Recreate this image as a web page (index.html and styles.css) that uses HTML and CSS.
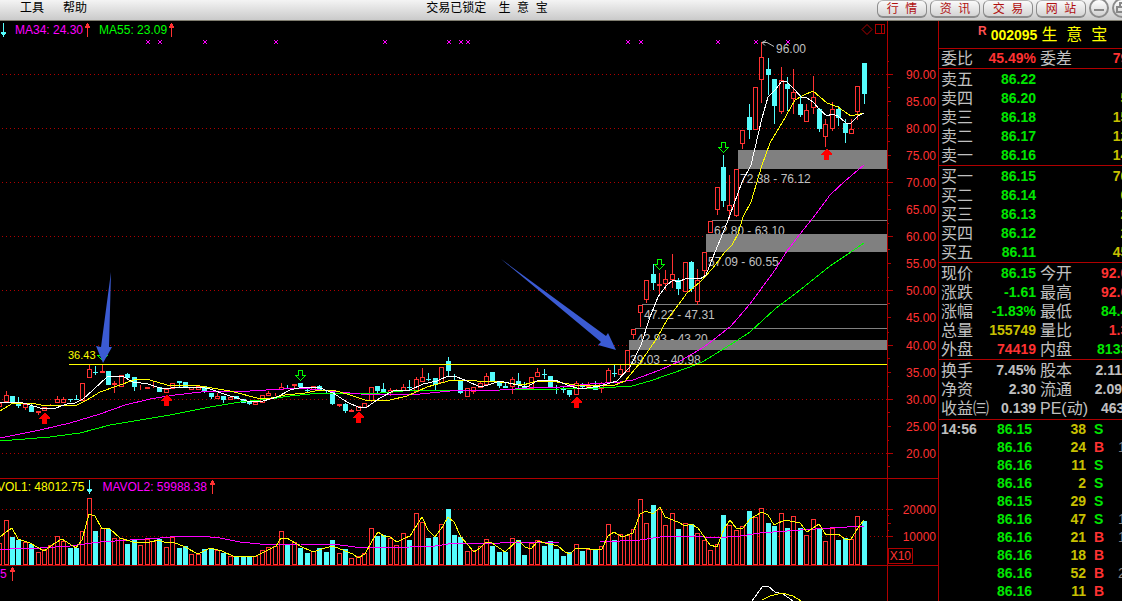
FILE: index.html
```html
<!DOCTYPE html>
<html lang="zh-CN">
<head>
<meta charset="utf-8">
<title>生意宝 002095</title>
<link rel="stylesheet" href="styles.css">
</head>
<body>
<header class="topbar">
  <nav class="menu">
    <button class="menu-item" type="button">工具</button>
    <button class="menu-item" type="button">帮助</button>
  </nav>
  <div class="topbar-title"><span>交易已锁定</span><span>生  意  宝</span></div>
  <div class="actions">
    <button class="pill" type="button">行  情</button>
    <button class="pill" type="button">资  讯</button>
    <button class="pill" type="button">交  易</button>
    <button class="pill" type="button">网  站</button>
    <button class="round" type="button" aria-label="最小化"><svg width="20" height="20" viewBox="0 0 20 20"><path d="M5 12h10" stroke="#888" stroke-width="2"/></svg></button>
    <button class="round" type="button" aria-label="还原"><svg width="20" height="20" viewBox="0 0 20 20"><path d="M5 9h7v5H5zM8 9V5h7v6h-3" fill="none" stroke="#888" stroke-width="2"/></svg></button>
  </div>
</header>
<main class="workspace">
  <div class="charts">
    <section class="pane pane-price">
      <svg class="plot" id="price" viewBox="0 21 938 457"></svg>
      <div class="legend">
        <svg class="arrow down" width="7" height="14" viewBox="0 0 7 14"><path d="M3 0h1v9h2v2H5v1H4v2H3v-2H2v-1H1V9h2z"/></svg>
        <span class="magenta">MA34: 24.30</span>
        <svg class="arrow up" width="7" height="14" viewBox="0 0 7 14"><path d="M3 14h1V5h2V3H5V1H4V0H3v1H2v2H1v2h2z"/></svg>
        <span class="green">MA55: 23.09</span>
        <svg class="arrow up" width="7" height="14" viewBox="0 0 7 14"><path d="M3 14h1V5h2V3H5V1H4V0H3v1H2v2H1v2h2z"/></svg>
      </div>
    </section>
    <section class="pane pane-volume">
      <svg class="plot" id="volume" viewBox="0 478 938 88"></svg>
      <div class="legend legend-volume">
        <span class="yellow">VOL1: 48012.75</span>
        <svg class="arrow down" width="7" height="14" viewBox="0 0 7 14"><path d="M3 0h1v9h2v2H5v1H4v2H3v-2H2v-1H1V9h2z"/></svg>
        <span class="magenta legend-second">MAVOL2: 59988.38</span>
        <svg class="arrow up" width="7" height="14" viewBox="0 0 7 14"><path d="M3 14h1V5h2V3H5V1H4V0H3v1H2v2H1v2h2z"/></svg>
      </div>
    </section>
    <section class="pane pane-indicator">
      <svg class="plot" id="indicator" viewBox="0 566 938 35"></svg>
      <div class="legend legend-indicator">
        <span class="magenta">5</span>
        <svg class="arrow up" width="7" height="14" viewBox="0 0 7 14"><path d="M3 14h1V5h2V3H5V1H4V0H3v1H2v2H1v2h2z"/></svg>
      </div>
    </section>
  </div>
  <aside class="side">
    <h1 class="stock"><span class="flag">R</span><span class="code">002095</span><span class="name">生  意  宝</span></h1>
    <table class="quote single">
      <tr><th>委比</th><td class="up">45.49%</td><th>委差</th><td class="up">795</td></tr>
    </table>
    <table class="quote">
      <tr><th>卖五</th><td class="dn">86.22</td><th></th><td></td></tr>
      <tr><th>卖四</th><td class="dn">86.20</td><th></th><td class="vol">50</td></tr>
      <tr><th>卖三</th><td class="dn">86.18</td><th></th><td class="vol">150</td></tr>
      <tr><th>卖二</th><td class="dn">86.17</td><th></th><td class="vol">120</td></tr>
      <tr><th>卖一</th><td class="dn">86.16</td><th></th><td class="vol">140</td></tr>
    </table>
    <table class="quote">
      <tr><th>买一</th><td class="dn">86.15</td><th></th><td class="vol">760</td></tr>
      <tr><th>买二</th><td class="dn">86.14</td><th></th><td class="vol">60</td></tr>
      <tr><th>买三</th><td class="dn">86.13</td><th></th><td class="vol">20</td></tr>
      <tr><th>买四</th><td class="dn">86.12</td><th></th><td class="vol">20</td></tr>
      <tr><th>买五</th><td class="dn">86.11</td><th></th><td class="vol">450</td></tr>
    </table>
    <table class="quote">
      <tr><th>现价</th><td class="dn">86.15</td><th>今开</th><td class="up">92.00</td></tr>
      <tr><th>涨跌</th><td class="dn">-1.61</td><th>最高</th><td class="up">92.00</td></tr>
      <tr><th>涨幅</th><td class="dn">-1.83%</td><th>最低</th><td class="dn">84.40</td></tr>
      <tr><th>总量</th><td class="vol">155749</td><th>量比</th><td class="up">1.30</td></tr>
      <tr><th>外盘</th><td class="up">74419</td><th>内盘</th><td class="dn">81330</td></tr>
    </table>
    <table class="quote facts">
      <tr><th>换手</th><td>7.45%</td><th>股本</th><td>2.11亿</td></tr>
      <tr><th>净资</th><td>2.30</td><th>流通</th><td>2.09亿</td></tr>
      <tr><th>收益㈢</th><td>0.139</td><th>PE(动)</th><td>463.0</td></tr>
    </table>
    <table class="ticks">
      <tr><td class="time">14:56</td><td class="price">86.15</td><td class="amount">38</td><td class="side-s">S</td><td></td></tr>
      <tr><td></td><td class="price">86.16</td><td class="amount">24</td><td class="side-b">B</td><td class="count">1</td></tr>
      <tr><td></td><td class="price">86.16</td><td class="amount">11</td><td class="side-s">S</td><td></td></tr>
      <tr><td></td><td class="price">86.16</td><td class="amount">2</td><td class="side-s">S</td><td></td></tr>
      <tr><td></td><td class="price">86.15</td><td class="amount">29</td><td class="side-s">S</td><td></td></tr>
      <tr><td></td><td class="price">86.16</td><td class="amount">47</td><td class="side-s">S</td><td class="count">1</td></tr>
      <tr><td></td><td class="price">86.16</td><td class="amount">21</td><td class="side-b">B</td><td class="count">1</td></tr>
      <tr><td></td><td class="price">86.16</td><td class="amount">18</td><td class="side-b">B</td><td></td></tr>
      <tr><td></td><td class="price">86.16</td><td class="amount">52</td><td class="side-b">B</td><td class="count">2</td></tr>
      <tr><td></td><td class="price">86.16</td><td class="amount">11</td><td class="side-b">B</td><td></td></tr>
    </table>
  </aside>
</main>
<script src="chart.js"></script>
</body>
</html>
```
FILE: styles.css
```css
* { box-sizing: border-box; }
html, body { height: 100%; }
body {
  margin: 0;
  display: flex;
  flex-direction: column;
  overflow: hidden;
  background: #000;
  color: #c0c0c0;
  font: 12px/14px "Liberation Sans", "Noto Sans CJK SC", sans-serif;
}
button {
  margin: 0;
  padding: 0;
  border: 0;
  background: none;
  color: inherit;
  font: inherit;
  white-space: pre;
}
.topbar {
  display: grid;
  grid-template-columns: 38% 1fr auto;
  flex: none;
  height: 21px;
  overflow: hidden;
  background: linear-gradient(#f4f4f4, #cacaca);
  border-bottom: 1px solid #807e70;
  color: #000;
}
.menu { display: flex; gap: 19px; padding: 0 20px; align-items: flex-start; }
.menu-item { height: 16px; }
.topbar-title { display: flex; gap: 12px; line-height: 16px; white-space: pre; }
.actions { display: flex; gap: 3px; margin-right: -10px; align-items: flex-start; }
.pill {
  width: 50px;
  height: 18px;
  border: 1px solid #8c8c8c;
  border-top-color: #b4b4b4;
  border-bottom-width: 2px;
  border-radius: 6px;
  background: linear-gradient(#fafafa, #d4d4d4);
  color: #b01010;
}
.round {
  width: 20px;
  height: 20px;
  margin-top: -2px;
  border: 2px solid #8c8c8c;
  border-radius: 50%;
  background: linear-gradient(#fff, #d0d0d0);
}
.round svg { display: block; margin: -2px; }

.workspace { display: grid; grid-template-columns: minmax(0, 1fr) 184px; flex: 1; min-height: 0; }
.charts { min-width: 0; overflow: hidden; }
.pane { display: grid; }
.pane > * { grid-area: 1 / 1; }
.plot { display: block; width: 100%; height: auto; font-size: 12px; }
.legend { display: flex; gap: 8px; height: 14px; margin-top: 2px; align-items: center; }
.pane-price .legend > .magenta, .pane-price .legend > .green { margin-right: -7px; }
.legend-volume { margin: 2px 0 0 -3px; gap: 2px; }
.legend-second { margin-left: 7px; }
.legend-indicator { margin-top: 1px; gap: 2px; }
.arrow { flex: none; shape-rendering: crispEdges; }
.arrow.down { fill: #54fcfc; }
.arrow.up { fill: #ff3232; }
.magenta { color: #f0f; }
.green { color: #0f0; }
.yellow { color: #ff0; }

.frame { stroke: #b00000; fill: none; }
.grid { stroke: #b00000; stroke-dasharray: 1 3; }
.axis { fill: #ff3232; text-anchor: end; }
.candle-up { fill: #000; stroke: #ff3232; }
.wick-up { stroke: #ff3232; }
.candle-down { fill: #54fcfc; }
.wick-down { stroke: #54fcfc; }
.line { fill: none; }
.line-white { stroke: #fff; }
.line-yellow { stroke: #ff0; }
.line-magenta { stroke: #f0f; }
.line-green { stroke: #0f0; }
.gap { fill: #808080; }
.note { fill: #c0c0c0; }
.note-line { fill: none; stroke: #c0c0c0; }
.peak { fill: #ff0; font-size: 11px; }
.buy { fill: #f00; }
.sell { fill: #000; stroke: #0f0; }
.mark { stroke: #f0f; }
.pointer { fill: #3b5bd3; }
.crisp { shape-rendering: crispEdges; }

.side { overflow: hidden; border-left: 1px solid #b00000; font-size: 14px; }
.stock {
  display: flex;
  height: 28px;
  margin: 0;
  padding-left: 39px;
  border-bottom: 1px solid #b00000;
  color: #ff0;
  font-size: 14px;
  line-height: 28px;
  white-space: pre;
}
.flag { margin-right: 4px; color: #ff5050; font-size: 12px; line-height: 20px; }
.name { margin-left: 4px; font-size: 16px; font-weight: 400; line-height: 28px; }
.quote, .ticks { width: 197px; table-layout: fixed; border-spacing: 0; border-collapse: separate; }
.quote { padding-top: 1px; border-bottom: 1px solid #b00000; }
.quote.single { padding-top: 0; }
.quote.facts { padding-bottom: 1px; }
th, td { height: 19px; padding: 0; line-height: 19px; white-space: nowrap; }
.quote th { width: 53px; padding-left: 4px; text-align: left; font-size: 16px; font-weight: 400; }
.quote th:first-child { width: 49px; padding-left: 2px; }
.quote td { width: 48px; text-align: right; font-weight: 700; }
.quote td:last-child { width: 47px; }
.up { color: #ff3232; }
.dn { color: #00e600; }
.vol { color: #c8c000; }
.ticks td { height: 18px; line-height: 18px; font-weight: 700; }
.ticks td:first-child { width: 53px; padding-left: 2px; }
.ticks .price { width: 40px; text-align: right; color: #00e600; }
.ticks .amount { width: 54px; text-align: right; color: #c8c000; }
.ticks .side-s, .ticks .side-b { width: 32px; padding-left: 8px; }
.ticks .side-s { color: #00e600; }
.ticks .side-b { color: #ff3232; }
.ticks .count { color: #808080; font-weight: 400; }
```
FILE: chart.js
```js
// One session per entry: type (r rising, c falling), high, body top, body bottom, low, volume top.
const sessions = `
r 403 403 407 407 543
r 391 395 402 402 520|c 396 396 402 402 537|c 397 402 406 408 540|r 404 404 408 410 542|c 403 406 412 412 544
r 411 411 413 415 552|r 407 407 411 411 549|r 404 404 405 405 545|r 396 399 403 403 536|r 397 399 403 403 541
c 399 399 400 402 548|c 395 399 400 400 548|r 383 383 401 401 531|r 365 369 378 378 498|c 366 372 373 375 531
r 365 371 373 373 528|c 371 371 385 385 529|r 381 383 385 393 538|r 375 375 387 387 538|c 373 374 378 378 544
c 377 377 387 391 540|r 385 387 388 390 545|r 387 387 389 389 539|r 381 387 388 388 541|c 387 387 392 392 539
r 389 389 393 393 547|r 383 383 389 389 537|c 381 381 383 388 548|c 382 382 387 387 546|r 387 387 390 390 554
r 385 386 390 390 554|c 386 386 392 393 549|c 393 393 397 399 548|r 393 396 399 399 550|c 396 396 400 403 553
r 397 397 400 400 556|c 396 396 399 399 557|c 399 399 403 403 557|c 401 401 404 405 556|r 402 402 405 405 556
r 395 395 403 403 550|r 391 393 396 396 547|r 393 393 394 396 546|r 383 387 390 390 531|c 385 388 389 389 544
r 384 384 386 389 542|c 383 383 387 387 548|c 387 390 391 392 553|r 386 386 390 390 551|c 385 386 390 390 548
c 390 390 391 393 552|c 391 391 404 405 540|r 404 404 406 407 553|c 403 404 411 413 549|r 409 410 412 412 558
r 406 406 411 411 556|r 403 403 408 408 553|r 387 387 401 402 528|c 386 386 391 395 536|c 383 389 393 393 535
r 388 390 393 396 538|r 389 390 391 391 545|r 384 387 391 391 533|c 380 387 388 390 540|r 377 379 392 392 513
r 368 377 382 382 522|c 373 379 380 381 538|c 378 378 385 390 537|r 367 367 383 383 524|c 357 361 371 377 509
c 374 376 377 380 535|c 380 380 393 394 537|r 388 388 397 397 551|r 387 387 392 394 550|r 381 383 388 388 546
r 373 376 385 385 539|c 372 372 381 381 546|c 381 381 386 388 552|c 383 386 388 388 552|r 377 379 387 394 538
c 373 381 385 389 540|c 382 386 388 390 555|r 377 377 389 389 543|r 368 372 377 377 540|c 369 374 375 379 546
c 376 376 387 387 541|c 385 387 388 394 549|c 387 388 390 393 556|c 390 390 395 397 552|r 381 383 395 395 544
c 383 385 387 389 551|r 382 386 388 388 549|c 381 386 390 390 550|r 382 383 389 393 546|r 368 370 383 383 524
c 365 373 374 377 540|r 365 369 375 375 534|r 350 350 372 372 535|r 329 329 335 339 529|r 305 305 313 327 499
r 280 280 300 303 523|c 264 274 283 290 505|r 273 284 286 294 509|r 270 279 284 290 525|r 254 274 280 288 513
c 278 280 289 295 529|r 262 262 292 292 523|c 261 262 289 292 524|r 269 280 302 305 533|r 252 252 271 277 540
r 221 221 233 233 550|r 187 187 210 215 544|c 155 167 201 207 515|r 175 205 211 219 525|r 169 169 216 217 530
r 130 130 144 149 526|c 104 117 130 139 511|r 87 87 130 130 517|r 42 57 80 103 508|c 58 69 75 95 523
c 79 79 106 124 526|r 67 80 112 114 513|c 77 84 89 111 528|r 69 92 99 114 516|c 95 104 115 117 528
r 104 110 122 122 535|r 76 97 108 114 519|c 108 109 129 132 529|r 119 124 137 147 541|r 102 109 129 131 528
c 106 109 118 126 540|c 119 123 133 143 538|r 119 129 134 134 539|r 86 86 112 120 516|c 63 63 94 104 521
`.trim().split(/[|\n]/).map(s => { const [t, ...v] = s.split(' '); return [t, ...v.map(Number)]; });

const xOf = i => Math.floor(6.1 + 6.405 * (i - 1));
const seg = (cls, x1, y1, x2, y2) => `<path class="${cls} crisp" d="M${x1} ${y1}L${x2} ${y2}"/>`;
const hline = (cls, x1, x2, y) => seg(cls, x1, y + .5, x2, y + .5);
const vline = (cls, x, y1, y2) => seg(cls, x + .5, y1, x + .5, y2);
const text = (cls, x, y, s) => `<text class="${cls}" x="${x}" y="${y}">${s}</text>`;
const curve = (color, pts) => `<polyline class="line line-${color} crisp" points="${pts}"/>`;
const body = (t, x, top, bottom) => {
  if (t === 'c') return `<rect class="candle-down crisp" x="${x - 2}" y="${top}" width="5" height="${bottom - top}"/>`;
  return `<rect class="candle-up crisp" x="${x - 1.5}" y="${top + .5}" width="4" height="${Math.max(bottom - top - 1, 0)}"/>`;
};
const buyArrow = (x, y) => `<path class="buy crisp" d="M${x - 1} ${y}h1l5 5v1h-3v5h-5v-5h-3v-1z"/>`;
const sellArrow = (x, y) => `<path class="sell crisp" d="M${x - 2.5} ${y + .5}h4v5h3l-5 5l-5 -5h3z"/>`;
const frame = (top, bottom) => vline('frame', 887, top, bottom);

let p = frame(21, 478);
const levels = [74, 128, 182, 236, 290, 345, 399, 453];
levels.forEach((y, i) => {
  p += hline('grid', 2, 887, y) + hline('frame', 888, 893, y) + text('axis', 936, y + 5, (90 - i * 10) + '.00');
  p += hline('frame', 888, 890, y + 13) + hline('frame', 888, 889, y - 13);
  if (i < 7) p += hline('frame', 888, 891, y + 27) + text('axis', 936, y + 32, (85 - i * 10) + '.00');
});
[[740, 183, '72.38 - 76.12'], [714, 235, '62.80 - 63.10'], [708, 266, '57.09 - 60.55'],
 [644, 319, '47.22 - 47.31'], [637, 343, '42.93 - 43.20'], [630, 364, '39.03 - 40.98']]
  .forEach(([x, y, s]) => { p += text('note', x, y, s); });
[[738, 150, 19], [706, 234, 18], [629, 340, 10], [712, 220, 1], [642, 304, 1], [635, 328, 1]]
  .forEach(([x, y, h]) => { p += `<rect class="gap crisp" x="${x}" y="${y}" width="${887 - x}" height="${h}"/>`; });
sessions.forEach(([t, hi, top, bottom, lo], i) => {
  const x = xOf(i);
  p += vline(t === 'r' ? 'wick-up' : 'wick-down', x, hi, lo) + body(t, x, top, bottom);
});
p += curve('green', '0,441 50,437 80,433 110,425 140,420 170,415 210,407 240,402 270,399 290,396 320,393 380,393 415,390 500,390 560,389 600,388 632,386 650,381 690,367 704,361 730,345 750,332 775,309 800,290 830,266 845,256 864,243');
p += curve('magenta', '0,438 20,434 40,430 70,423 100,414 125,405 150,399 175,395 210,391 250,391 300,388 330,391 360,394 400,395 420,394 450,391 500,390 530,388 560,387 590,384 620,382 633,380 660,370 680,361 704,347 717,337 731,326 750,304 775,270 787,251 800,234 816,214 830,195 845,181 864,165');
p += curve('yellow', '0,411 13,403 30,403 47,406 77,405 87,400 100,392 117,386 137,379 150,380 167,385 200,386 230,391 257,398 267,399 285,395 305,393 315,391 333,390 350,395 365,400 390,400 407,396 427,387 452,380 477,381 500,382 523,385 537,381 557,382 575,385 600,386 615,385 625,381 640,363 657,338 667,320 687,293 700,282 713,268 725,252 732,245 738,234 743,217 751,202 762,165 770,143 782,123 795,100 802,96 813,91 827,103 838,107 851,116 864,113');
p += curve('white', '0,403 20,402 30,405 40,408 53,409 67,404 75,403 83,399 93,390 107,377 122,376 133,382 148,384 163,389 180,387 200,387 210,389 227,395 247,401 263,401 277,397 290,390 303,387 320,388 333,393 347,402 360,408 367,407 380,398 393,391 410,390 423,384 437,381 448,376 457,377 467,381 480,387 488,385 500,381 513,384 527,387 537,381 555,380 567,385 580,389 600,386 617,381 630,367 641,345 650,317 658,297 667,285 673,280 678,282 687,278 700,279 706,275 713,257 725,228 730,215 742,182 751,165 762,118 768,97 775,90 782,81 787,82 795,90 801,97 807,98 813,102 820,110 827,116 832,114 838,116 846,123 851,123 858,116 864,113');
p += hline('line-yellow', 69, 887, 364) + text('peak', 68, 359, '36.43');
[[103, 350], [301, 370], [660, 259], [724, 142]].forEach(([x, y]) => { p += sellArrow(x, y); });
[[45, 413], [167, 395], [359, 412], [577, 397], [827, 149]].forEach(([x, y]) => { p += buyArrow(x, y); });
[148, 160, 205, 276, 385, 449, 461, 468, 628, 641, 718, 756, 788].forEach(x => {
  p += `<path class="mark" d="M${x - 2} 40l4 4m0 -4l-4 4"/>`;
});
p += '<path class="note-line" d="M762 42.500h5l7 4M762 42.500l4 -2M762 42.500l3 3"/>' + text('note', 776, 53, '96.00');
p += '<path class="frame" d="M867 24.500l5 5l-5 5l-5 -5z"/><path class="frame crisp" d="M875.500 24.500h9v9h-9zM881.500 24v10"/>';
p += '<path class="pointer" d="M111 272L109 347L112 347L103 363L96 346L101 347zM501 259L606 336L608 333L616 350L598 345L601 342z"/>';
document.getElementById('price').innerHTML = p;

let v = frame(478, 566) + hline('frame', 0, 938, 478);
[[509, 20000], [536, 10000]].forEach(([y, n]) => {
  v += hline('grid', 2, 887, y) + hline('frame', 888, 893, y) + text('axis', 936, y + 5, n);
});
[515, 523, 530].forEach((y, i) => { v += hline('frame', 888, i === 1 ? 891 : 889, y); });
sessions.forEach((s, i) => { v += body(s[0], xOf(i), s[5], 565); });
v += hline('frame', 0, 938, 565);
v += curve('magenta', '0,550 20,548 40,548 70,546 100,542 130,540 160,538 180,536 200,536 220,538 240,542 260,544 300,544 340,545 355,547 375,548 410,547 435,546 455,543 500,543 560,542 600,542 640,540 660,537 695,536 715,538 740,536 760,533 800,530 830,528 864,526');
v += curve('yellow', '0,537 6,532 12,528 18,539 30,543 44,551 55,543 62,539 76,548 82,540 89,514 95,516 102,529 109,528 120,538 133,542 150,542 159,540 166,543 173,542 185,547 198,554 210,548 222,551 235,557 256,556 276,546 281,538 287,538 300,546 313,552 325,548 333,546 345,551 353,554 358,558 365,554 372,541 378,532 384,536 390,537 397,542 405,538 410,536 422,517 428,530 435,537 443,526 448,517 454,522 461,537 474,552 480,548 486,542 492,543 505,552 518,540 525,547 531,549 538,541 545,543 558,546 565,552 570,554 576,548 584,548 595,550 602,549 608,536 614,532 622,537 633,533 640,514 646,511 653,514 660,507 665,517 678,522 685,526 691,524 698,528 710,545 717,547 724,529 730,520 736,528 743,528 750,519 762,512 768,515 774,525 785,520 800,523 807,532 813,528 819,524 826,535 838,534 845,539 851,539 858,528 864,520');
v += '<path class="frame crisp" d="M888.500 548.500h24v15h-24z"/>' + text('axis', 911, 560, 'X10');
document.getElementById('volume').innerHTML = v;

document.getElementById('indicator').innerHTML = frame(566, 601)
  + curve('white', '752,601 762,587 768,586 775,592 783,594 793,601')
  + curve('yellow', '762,600 770,596 782,593 793,596 801,601');
```
